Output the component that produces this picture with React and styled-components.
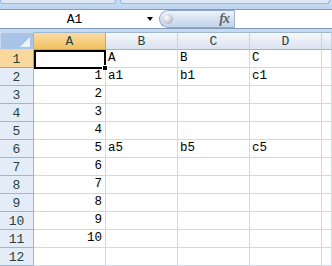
import React from 'react'
import styled, { createGlobalStyle } from 'styled-components'

const COLS = ['A', 'B', 'C', 'D', '']
const ROWS = [
  ['', 'A', 'B', 'C'],
  ['1', 'a1', 'b1', 'c1'],
  ['2'],
  ['3'],
  ['4'],
  ['5', 'a5', 'b5', 'c5'],
  ['6'],
  ['7'],
  ['8'],
  ['9'],
  ['10'],
  [],
]

const App = () => {
  return (
    <>
      <Global />
      <Window>
        <Ribbon>
          <RibbonTab $w={114} />
          <RibbonTab $w={208} />
        </Ribbon>
        <FormulaBar>
          <NameBox>
            <NameText>A1</NameText>
            <DropArrow />
          </NameBox>
          <FxButton>
            <Orb />
            <Fx>fx</Fx>
          </FxButton>
          <FormulaInput />
        </FormulaBar>
        <Sheet>
          <Corner>
            <CornerMark />
          </Corner>
          {COLS.map((c, i) => (
            <ColHead key={'h' + i} $active={i === 0}>{c}</ColHead>
          ))}
          {ROWS.map((row, r) => (
            <React.Fragment key={r}>
              <RowHead $active={r === 0}>{r + 1}</RowHead>
              {COLS.map((_, c) => (
                <Cell key={c} $right={c === 0}>
                  {row[c] || ''}
                  {r === 0 && c === 0 && (
                    <Selection>
                      <FillHandle />
                    </Selection>
                  )}
                </Cell>
              ))}
            </React.Fragment>
          ))}
        </Sheet>
      </Window>
    </>
  )
}

export default App

// ================= styled ===================

const Global = createGlobalStyle`
  html, body {
    margin: 0;
    padding: 0;
    background: #fff;
    overflow: hidden;
  }
`

const Window = styled.div`
  width: 332px;
  height: 266px;
  overflow: hidden;
  background: #c5d9f1;
  font-family: "Liberation Mono", monospace;
`

const Ribbon = styled.div`
  height: 9px;
  display: flex;
  gap: 4px;
  align-items: flex-start;
  background: linear-gradient(#c9dbf2, #bfd4ee);
`

const RibbonTab = styled.div`
  width: ${p => p.$w}px;
  height: 3px;
  background: #dce8f6;
  border: 1px solid #9ab9e0;
  border-top: none;
  border-radius: 0 0 3px 3px;
`

const FormulaBar = styled.div`
  height: 18px;
  display: flex;
  border-top: 1px solid #7f9db9;
  border-bottom: 1px solid #7f9db9;
  background: #fff;
  margin-bottom: 3px;
`

const NameBox = styled.div`
  width: 159px;
  display: flex;
  align-items: center;
  background: #fff;
`

const NameText = styled.span`
  flex: 1;
  text-align: center;
  font-size: 13px;
  color: #000;
  padding-left: 2px;
`

const DropArrow = styled.span`
  width: 0;
  height: 0;
  margin-right: 6px;
  border-left: 3.5px solid transparent;
  border-right: 3.5px solid transparent;
  border-top: 4px solid #000;
`

const FxButton = styled.div`
  width: 76px;
  display: flex;
  align-items: center;
  justify-content: space-between;
  padding: 0 5px 0 3px;
  box-sizing: border-box;
  border: 1px solid #8ea8c9;
  border-right-color: #9fb6d2;
  border-radius: 9px 0 0 9px;
  background: linear-gradient(#eef3fa, #d6e2f1 50%, #c3d4ea);
`

const Orb = styled.span`
  width: 10px;
  height: 10px;
  border-radius: 50%;
  background: radial-gradient(circle at 35% 35%, #ffffff, #c8ccd2 55%, #8e96a2);
`

const Fx = styled.span`
  font-family: "Liberation Serif", serif;
  font-style: italic;
  font-weight: bold;
  font-size: 14px;
  color: #5d636b;
  letter-spacing: -1px;
`

const FormulaInput = styled.div`
  flex: 1;
  background: #fff;
`

const Sheet = styled.div`
  display: grid;
  grid-template-columns: 34px 72px 72px 72px 72px 1fr;
  grid-auto-rows: 18px;
  background: #fff;
`

const Corner = styled.div`
  position: relative;
  box-sizing: border-box;
  background: #a9c4e9;
  border: 1px solid #c9daf1;
  border-right-color: #9eb6ce;
`

const CornerMark = styled.span`
  position: absolute;
  right: 3px;
  bottom: 2px;
  width: 0;
  height: 0;
  border-left: 10px solid transparent;
  border-bottom: 10px solid #eef3fb;
`

const ColHead = styled.div`
  box-sizing: border-box;
  display: flex;
  align-items: center;
  justify-content: center;
  font-size: 13px;
  color: #27413e;
  border-top: 1px solid #9eb6ce;
  border-right: 1px solid ${p => (p.$active ? '#f29536' : '#c5d2e2')};
  border-bottom: 1px solid ${p => (p.$active ? '#f29536' : '#9eb6ce')};
  background: ${p =>
    p.$active
      ? 'linear-gradient(#f9dba5, #f1c15f)'
      : 'linear-gradient(#f6f9fc, #e4ebf4 60%, #dae3ef)'};
`

const RowHead = styled.div`
  box-sizing: border-box;
  display: flex;
  align-items: center;
  justify-content: center;
  font-size: 13px;
  color: #27413e;
  padding-top: 1px;
  border-right: 1px solid ${p => (p.$active ? '#f29536' : '#9eb6ce')};
  border-bottom: 1px solid ${p => (p.$active ? '#f29536' : '#9eb6ce')};
  background: ${p => (p.$active ? '#f8d89c' : '#e4ecf7')};
`

const Cell = styled.div`
  position: relative;
  box-sizing: border-box;
  display: flex;
  align-items: flex-end;
  justify-content: ${p => (p.$right ? 'flex-end' : 'flex-start')};
  padding: 0 3px 1px 2px;
  font-size: 12.5px;
  line-height: 15px;
  color: #000;
  border-right: 1px solid #d0d7e5;
  border-bottom: 1px solid #d0d7e5;
`

const Selection = styled.div`
  position: absolute;
  z-index: 2;
  left: 0;
  top: 0;
  width: 72px;
  height: 19px;
  box-sizing: border-box;
  border: 2px solid #000;
`

const FillHandle = styled.span`
  position: absolute;
  right: -4px;
  bottom: -4px;
  width: 4px;
  height: 4px;
  background: #000;
  border: 1px solid #fff;
`
